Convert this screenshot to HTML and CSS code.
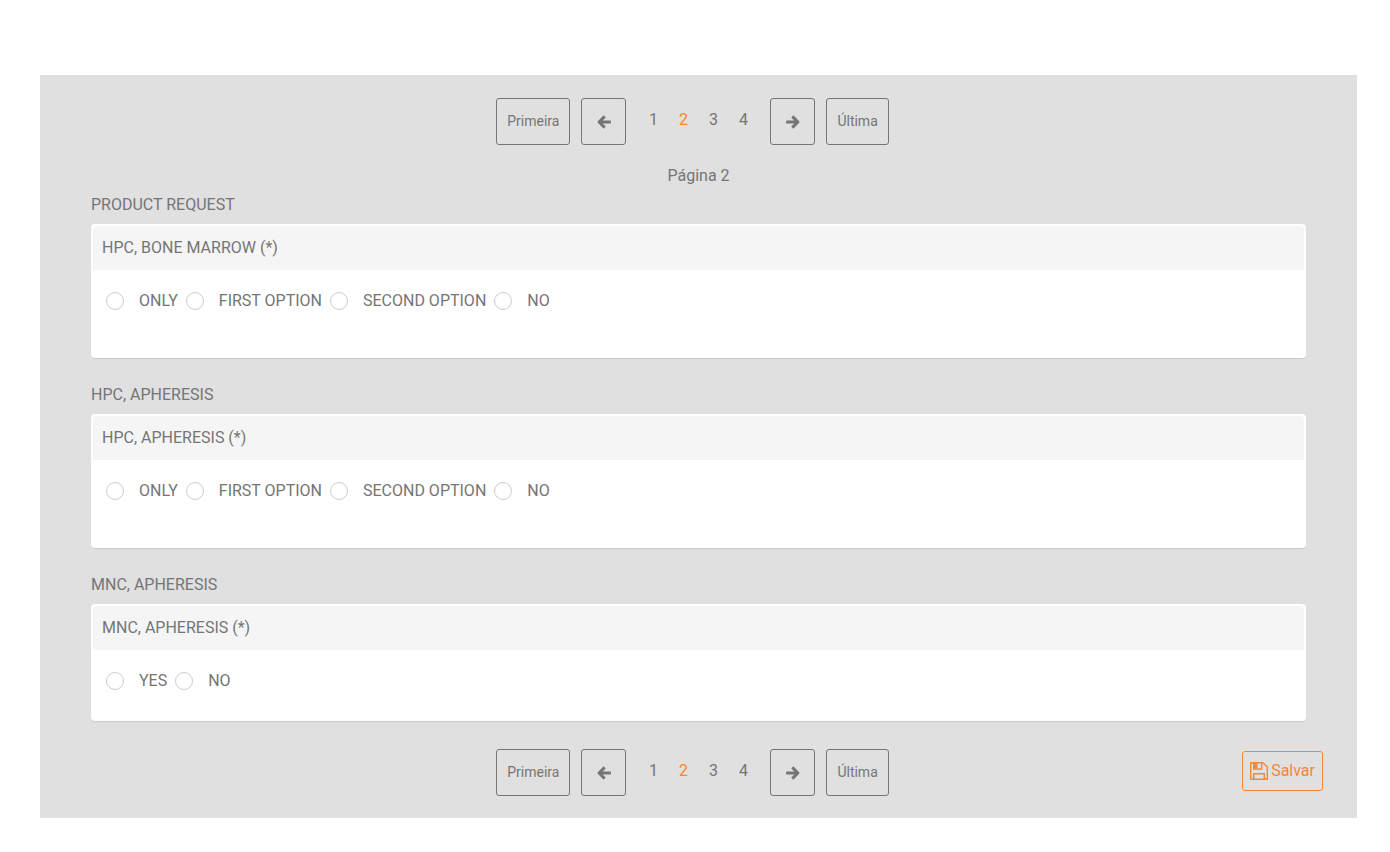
FILE: index.html
```html
<!DOCTYPE html>
<html lang="pt-BR">
<head>
<meta charset="utf-8">
<meta name="viewport" content="width=device-width, initial-scale=1">
<title>Página 2</title>
<link rel="stylesheet" href="styles.css">
</head>
<body>
<svg class="sprite" aria-hidden="true">
  <symbol id="arrow-left" viewBox="0 0 14 14"><path d="M7.700 1.400 2.100 7l5.600 5.600M2.500 7H12.600" fill="none" stroke="currentColor" stroke-width="3" stroke-linejoin="round"/><path d="M12.300 5.500h1q.7 0 .7.700v1.600q0 .7-.7.700h-1z" fill="currentColor"/></symbol>
  <symbol id="arrow-right" viewBox="0 0 14 14"><path d="M6.300 1.400 11.900 7l-5.600 5.600M11.500 7H1.400" fill="none" stroke="currentColor" stroke-width="3" stroke-linejoin="round"/><path d="M1.700 5.500h-1Q0 5.500 0 6.200v1.600q0 .7.700.7h1z" fill="currentColor"/></symbol>
</svg>
<main class="panel">
  <nav class="bar" aria-label="Paginação superior">
    <div class="pager">
      <button class="btn" type="button">Primeira</button>
      <button class="btn btn-arrow" type="button" aria-label="Anterior"><svg class="arrow"><use href="#arrow-left"/></svg></button>
      <div class="pages"><a href="#p1">1</a><a class="current" href="#p2" aria-current="page">2</a><a href="#p3">3</a><a href="#p4">4</a></div>
      <button class="btn btn-arrow" type="button" aria-label="Próxima"><svg class="arrow"><use href="#arrow-right"/></svg></button>
      <button class="btn" type="button">Última</button>
    </div>
  </nav>
  <form class="form" id="request">
    <p class="page-label">Página 2</p>
    <section class="group">
      <h2 class="title">PRODUCT REQUEST</h2>
      <fieldset class="card">
        <legend class="card-head">HPC, BONE MARROW (*)</legend>
        <div class="options">
          <label class="option"><input type="radio" name="marrow">ONLY</label>
          <label class="option"><input type="radio" name="marrow">FIRST OPTION</label>
          <label class="option"><input type="radio" name="marrow">SECOND OPTION</label>
          <label class="option"><input type="radio" name="marrow">NO</label>
        </div>
      </fieldset>
    </section>
    <section class="group">
      <h2 class="title">HPC, APHERESIS</h2>
      <fieldset class="card">
        <legend class="card-head">HPC, APHERESIS (*)</legend>
        <div class="options">
          <label class="option"><input type="radio" name="hpc">ONLY</label>
          <label class="option"><input type="radio" name="hpc">FIRST OPTION</label>
          <label class="option"><input type="radio" name="hpc">SECOND OPTION</label>
          <label class="option"><input type="radio" name="hpc">NO</label>
        </div>
      </fieldset>
    </section>
    <section class="group">
      <h2 class="title">MNC, APHERESIS</h2>
      <fieldset class="card">
        <legend class="card-head">MNC, APHERESIS (*)</legend>
        <div class="options options-short">
          <label class="option"><input type="radio" name="mnc">YES</label>
          <label class="option"><input type="radio" name="mnc">NO</label>
        </div>
      </fieldset>
    </section>
  </form>
  <div class="bar">
    <nav class="pager" aria-label="Paginação inferior">
      <button class="btn" type="button">Primeira</button>
      <button class="btn btn-arrow" type="button" aria-label="Anterior"><svg class="arrow"><use href="#arrow-left"/></svg></button>
      <div class="pages"><a href="#p1">1</a><a class="current" href="#p2" aria-current="page">2</a><a href="#p3">3</a><a href="#p4">4</a></div>
      <button class="btn btn-arrow" type="button" aria-label="Próxima"><svg class="arrow"><use href="#arrow-right"/></svg></button>
      <button class="btn" type="button">Última</button>
    </nav>
    <button class="save" type="submit" form="request">
      <svg class="disk" viewBox="0 0 18 18" aria-hidden="true">
        <path d="M.7.7H13L17.300 5v12.300H.7z" fill="none" stroke="currentColor" stroke-width="1.400" stroke-linejoin="round"/>
        <path d="M3.700 1v6h8V1M3.700 17v-5.300h10.600V17" fill="none" stroke="currentColor" stroke-width="1.400"/>
        <path d="M3.700 1H7.500v5.500H3.700z" fill="currentColor"/>
      </svg>Salvar</button>
  </div>
</main>
</body>
</html>
```
FILE: styles.css
```css
* {
  box-sizing: border-box;
}

body {
  margin: 75px 33px 34px 40px;
  background: #fff;
  color: #757575;
  font: 16px/24px Roboto, sans-serif;
}

.sprite {
  position: absolute;
  width: 0;
  height: 0;
}

.panel {
  padding: 23px 0 22px;
  background: #e0e0e0;
}

.bar {
  display: grid;
  grid-template-columns: 1fr auto 1fr;
  align-items: start;
  padding: 0 34px 0 22px;
}

.pager {
  grid-column: 2;
  display: flex;
  gap: 11px;
}

.btn {
  height: 47px;
  padding: 0 10px 2px;
  border: 1px solid #757575;
  border-radius: 3px;
  background: transparent;
  color: inherit;
  font: 14px/20px Roboto, sans-serif;
}

.btn-arrow {
  display: grid;
  place-items: center;
  width: 45px;
  padding: 0;
}

.arrow {
  display: block;
  width: 14px;
  height: 14px;
}

.pages {
  display: flex;
  margin: 0 1px;
  padding-top: 10px;
}

.pages a {
  width: 30px;
  color: inherit;
  text-align: center;
  text-decoration: none;
}

.pages .current {
  color: #ff8426;
}

.form {
  margin: 19px 51px 28px;
}

.page-label {
  margin: 0 0 5px;
  text-align: center;
}

.group + .group {
  margin-top: 25px;
}

.title {
  margin: 0 0 7px;
  font-size: 16px;
  font-weight: 400;
}

.card {
  min-width: 0;
  margin: 0;
  padding: 2px;
  border: 0;
  border-radius: 4px;
  background: #fff;
  box-shadow: 0 1px 1px rgba(0, 0, 0, 0.1);
}

.card-head {
  float: left;
  width: 100%;
  padding: 10px 9px;
  border-radius: 4px 4px 0 0;
  background: #f5f5f5;
}

.options {
  clear: both;
  display: flex;
  flex-wrap: wrap;
  gap: 8px;
  padding: 19px 13px 43px;
}

.options-short {
  padding-bottom: 26px;
}

.option {
  display: flex;
  align-items: center;
  gap: 15px;
}

.option input {
  appearance: none;
  width: 18px;
  height: 18px;
  margin: 0;
  border: 1px solid #ccc;
  border-radius: 50%;
  background: #fff;
}

.option input:checked {
  border: 5px solid #f58634;
}

.save {
  justify-self: end;
  display: flex;
  align-items: center;
  gap: 3px;
  height: 40px;
  margin-top: 2px;
  padding: 0 7px;
  border: 1px solid #f58634;
  border-radius: 3px;
  background: transparent;
  color: #f58634;
  font: 16px/24px Roboto, sans-serif;
}

.disk {
  width: 18px;
  height: 18px;
}
```
